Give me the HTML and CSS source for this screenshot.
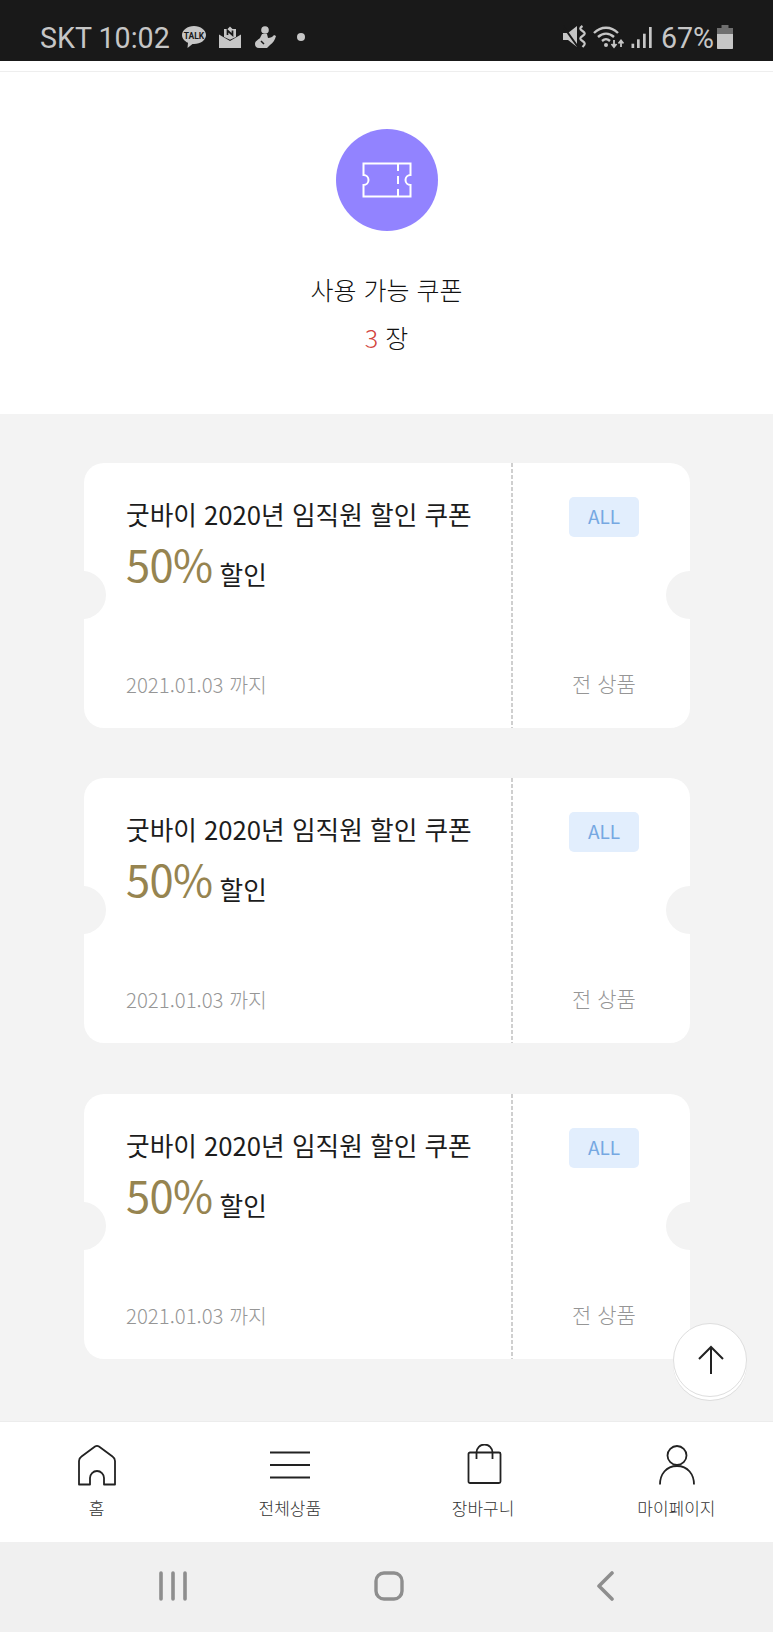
FILE: index.html
```html
<!DOCTYPE html>
<html lang="ko">
<head>
<meta charset="utf-8">
<title>쿠폰</title>
<link rel="stylesheet" href="styles.css">
</head>
<body>
<div class="phone">
  <header class="status">
    <div class="status-left">
      <span class="status-text">SKT 10:02</span>
      <svg class="ic-talk" width="26" height="24" viewBox="0 0 26 24"><path d="M13 1C6.400 1 1 5 1 10c0 3.300 2.400 6.200 6 7.800L6.500 23l5-4.100c.5 0 1 .1 1.500.1 6.600 0 12-4 12-9S19.600 1 13 1z" fill="#c6c6c6"/><text x="13" y="13.500" class="talk-label">TALK</text></svg>
      <svg class="ic-mail" width="22" height="22" viewBox="0 0 22 22"><path d="M0 8.500l11 6.500 11-6.500V22H0z" fill="#c6c6c6"/><path d="M5 3h3.500L11 .5 13.500 3H17v8l-6 2.800L5 11z" fill="#c6c6c6"/><path d="M8.500 9V4.500l5 4.500V4.500" fill="none" stroke="#191919" stroke-width="1.700"/></svg>
      <svg class="ic-baby" width="22" height="24" viewBox="0 0 22 24"><circle cx="10" cy="5" r="3.800" fill="#c6c6c6"/><path d="M7 9h5l1 4c2 0 5-1 6-3l2 1c-1 4-3 7-6 9l-3 3H4c-3 0-4-2-4-4 0-3 3-4 5-6z" fill="#c6c6c6"/><path d="M6 16l3 3" stroke="#191919" stroke-width="1.500"/></svg>
      <span class="dot"></span>
    </div>
    <div class="status-right">
      <svg class="ic-mute" width="23" height="24" viewBox="0 0 23 24"><path d="M0 8h5l9-7v21l-9-7H0z" fill="#c6c6c6"/><path d="M0 1l15 21" stroke="#191919" stroke-width="2"/><path d="M19.500 1c-3 2-3 3 0 5s3 3 0 5-3 3 0 5 3 3 0 6" fill="none" stroke="#c6c6c6" stroke-width="2.200"/></svg>
      <svg class="ic-wifi" width="31" height="24" viewBox="0 0 31 24"><g fill="none" stroke="#c6c6c6" stroke-width="2.400"><path d="M1 8c7-7 17-7 24 0"/><path d="M5 12c5-4.500 11-4.500 16 0"/><path d="M9 16c3-2.500 5-2.500 8 0"/></g><circle cx="13" cy="20" r="2" fill="#c6c6c6"/><path d="M21 15v6M18.500 19l2.500 3 2.500-3M28 22v-6M25.500 18.500l2.500-3 2.500 3" fill="none" stroke="#c6c6c6" stroke-width="1.800"/></svg>
      <svg class="ic-signal" width="21" height="24" viewBox="0 0 21 24"><g fill="#c6c6c6"><rect x="0.500" y="18.700" width="2.700" height="4.300"/><rect x="6" y="14.300" width="2.700" height="8.700"/><rect x="12" y="8.700" width="2.700" height="14.300"/><rect x="18" y="2" width="2.700" height="21"/></g></svg>
      <span class="status-text">67%</span>
      <svg class="ic-batt" width="16" height="24" viewBox="0 0 16 24"><path d="M4.500 0h7v3h-7z" fill="#6f6f6f"/><path d="M0 3h16v6H0z" fill="#6f6f6f"/><path d="M0 9h16v14c0 .6-.4 1-1 1H1c-.6 0-1-.4-1-1z" fill="#c6c6c6"/></svg>
    </div>
  </header>

  <div class="topbar"></div>

  <section class="hero">
    <div class="hero-circle">
      <svg width="50" height="36" viewBox="0 0 50 36"><path d="M1.500 1.500h47v11.500a5 5 0 0 0 0 10v11.500h-47V23a5 5 0 0 0 0-10z" fill="none" stroke="#fff" stroke-width="2"/><path d="M36 1v8M36 14v8M36 27v8" stroke="#fff" stroke-width="2"/></svg>
    </div>
    <p class="hero-title">사용 가능 쿠폰</p>
    <p class="hero-count"><span class="red">3</span> 장</p>
  </section>

  <main class="list">
    <article class="coupon">
      <div class="coupon-main">
        <p class="coupon-name">굿바이 2020년 임직원 할인 쿠폰</p>
        <p class="coupon-rate"><span class="pct">50%</span> <span class="off">할인</span></p>
        <p class="coupon-date">2021.01.03 까지</p>
      </div>
      <div class="coupon-side">
        <span class="badge">ALL</span>
        <span class="scope">전 상품</span>
      </div>
    </article>
    <article class="coupon">
      <div class="coupon-main">
        <p class="coupon-name">굿바이 2020년 임직원 할인 쿠폰</p>
        <p class="coupon-rate"><span class="pct">50%</span> <span class="off">할인</span></p>
        <p class="coupon-date">2021.01.03 까지</p>
      </div>
      <div class="coupon-side">
        <span class="badge">ALL</span>
        <span class="scope">전 상품</span>
      </div>
    </article>
    <article class="coupon coupon-last">
      <div class="coupon-main">
        <p class="coupon-name">굿바이 2020년 임직원 할인 쿠폰</p>
        <p class="coupon-rate"><span class="pct">50%</span> <span class="off">할인</span></p>
        <p class="coupon-date">2021.01.03 까지</p>
      </div>
      <div class="coupon-side">
        <span class="badge">ALL</span>
        <span class="scope">전 상품</span>
      </div>
    </article>
    <button class="to-top" type="button" aria-label="맨 위로">
      <svg width="28" height="30" viewBox="0 0 28 30"><path d="M14 29V2M2 14L14 2l12 12" fill="none" stroke="#222" stroke-width="2"/></svg>
    </button>
  </main>

  <nav class="tabs">
    <a class="tab">
      <svg width="38" height="42" viewBox="0 0 38 42"><path d="M1 40.500V17c0-2 1-3.500 2.500-4.500L17 2.500q2-1.200 4 0l13.500 10c1.500 1 2.500 2.500 2.500 4.500v23.500H26V34a7 7 0 0 0-14 0v6.500z" fill="none" stroke="#222" stroke-width="1.800" stroke-linejoin="round"/></svg>
      <span>홈</span>
    </a>
    <a class="tab">
      <svg width="40" height="42" viewBox="0 0 40 42"><path d="M0 8.500h40M0 21h40M0 33.500h40" stroke="#222" stroke-width="1.800"/></svg>
      <span>전체상품</span>
    </a>
    <a class="tab">
      <svg width="38" height="42" viewBox="0 0 38 42"><rect x="4.500" y="8.500" width="32" height="30.500" rx="1.500" fill="none" stroke="#222" stroke-width="1.800"/><path d="M12.500 15V8.500a8 8 0 0 1 16 0V15" fill="none" stroke="#222" stroke-width="1.800"/></svg>
      <span>장바구니</span>
    </a>
    <a class="tab">
      <svg width="38" height="42" viewBox="0 0 38 42"><circle cx="20" cy="11.500" r="9.500" fill="none" stroke="#222" stroke-width="1.800"/><path d="M3 40.500c0-10 6-18.500 17-18.500s17 8.500 17 18.500" fill="none" stroke="#222" stroke-width="1.800"/></svg>
      <span>마이페이지</span>
    </a>
  </nav>

  <footer class="sysnav">
    <svg width="28" height="30" viewBox="0 0 28 30"><path d="M2 2v26M14 2v26M26 2v26" stroke="#8e8e8e" stroke-width="3.600" stroke-linecap="round"/></svg>
    <svg class="sys-home" width="30" height="30" viewBox="0 0 30 30"><rect x="2" y="2" width="26" height="26" rx="8" fill="none" stroke="#8e8e8e" stroke-width="3.400"/></svg>
    <svg width="18" height="30" viewBox="0 0 18 30"><path d="M16 2L3 15l13 13" fill="none" stroke="#8e8e8e" stroke-width="3.600" stroke-linecap="round" stroke-linejoin="round"/></svg>
  </footer>
</div>
</body>
</html>
```
FILE: styles.css
```css
* { box-sizing: border-box; }
html, body { margin: 0; padding: 0; }
body {
  width: 773px;
  height: 1632px;
  overflow: hidden;
  background: #fff;
  font-family: "Noto Sans CJK KR", "Noto Sans", sans-serif;
  font-weight: 300;
}
p { margin: 0; }
.phone { display: flex; flex-direction: column; width: 773px; height: 1632px; }

.status {
  flex: 0 0 61px;
  display: flex;
  justify-content: space-between;
  align-items: center;
  padding: 15px 40px 0 40px;
  background: #191919;
}
.status-left, .status-right { display: flex; align-items: center; }
.status svg { margin-bottom: 3px; }
.status-text {
  font-family: Roboto, sans-serif;
  font-weight: 400;
  font-size: 28.600px;
  line-height: 34px;
  color: #c6c6c6;
}
.talk-label { font-family: Roboto, sans-serif; font-weight: 700; font-size: 8.500px; fill: #191919; text-anchor: middle; }
.ic-talk { margin-left: 11px; }
.ic-mail { margin-left: 12px; }
.ic-baby { margin-left: 14px; }
.dot { width: 8px; height: 8px; border-radius: 50%; background: #c6c6c6; margin-left: 20px; margin-bottom: 3px; }
.ic-wifi { margin-left: 7px; }
.ic-signal { margin-left: 7px; }
.status-right .status-text { margin-left: 9px; }
.ic-batt { margin-left: 3px; }

.topbar { flex: 0 0 11px; background: #fff; border-bottom: 1px solid #eeeeee; }

.hero {
  flex: 0 0 342px;
  display: flex;
  flex-direction: column;
  align-items: center;
  padding-top: 57px;
  background: #fff;
}
.hero-circle {
  width: 102px;
  height: 102px;
  border-radius: 50%;
  background: #9283ff;
  display: flex;
  align-items: center;
  justify-content: center;
}
.hero-title { margin-top: 40px; font-size: 25px; line-height: 36px; color: #111; }
.hero-count { margin-top: 12px; font-size: 25px; line-height: 36px; color: #111; }
.red { color: #d2443c; }

.list {
  position: relative;
  flex: 1;
  display: flex;
  flex-direction: column;
  gap: 50px;
  padding: 49px 83px 0 84px;
  background: #f3f3f3;
}
.coupon {
  position: relative;
  display: flex;
  height: 265px;
  background: #fff;
  border-radius: 20px;
  overflow: hidden;
}
.coupon-last { margin-top: 1px; }
.coupon::before, .coupon::after {
  content: "";
  position: absolute;
  top: 108px;
  width: 48px;
  height: 48px;
  border-radius: 50%;
  background: #f3f3f3;
}
.coupon::before { left: -26px; }
.coupon::after { right: -24px; }
.coupon-main {
  flex: 0 0 427px;
  display: flex;
  flex-direction: column;
  padding: 30px 0 0 42px;
}
.coupon-name { font-size: 25.700px; line-height: 42px; font-weight: 400; color: #1c1c1c; white-space: nowrap; }
.coupon-rate { margin-top: -1px; display: flex; align-items: flex-start; gap: 7px; }
.pct { font-size: 43.500px; line-height: 60px; font-weight: 400; letter-spacing: -0.600px; color: #968450; }
.off { margin-top: 15px; font-size: 25.700px; line-height: 50px; font-weight: 400; color: #1c1c1c; }
.coupon-date { margin-top: auto; margin-bottom: 29px; font-size: 20.400px; line-height: 30px; color: #969696; }
.coupon-side {
  flex: 1;
  display: flex;
  flex-direction: column;
  align-items: flex-start;
  padding: 34px 0 0 58px;
  background: repeating-linear-gradient(#cfcfcf 0 4px, transparent 4px 6px) left top / 2px 100% no-repeat;
}
.badge {
  width: 70px;
  height: 40px;
  border-radius: 5px;
  background: #e2eefd;
  color: #76a8e2;
  font-size: 19px;
  font-weight: 400;
  line-height: 37px;
  text-align: center;
}
.scope { margin-top: auto; margin-bottom: 30px; margin-left: 3px; font-size: 21px; line-height: 30px; color: #969696; white-space: nowrap; }

.to-top {
  position: absolute;
  right: 26px;
  top: 909px;
  width: 74px;
  height: 74px;
  padding: 0 0 0 2px;
  border-radius: 50%;
  border: 1px solid #dedede;
  background: #fff;
  box-shadow: 0 3px 0 #fff, 0 4px 0 #dcdcdc;
  display: flex;
  align-items: center;
  justify-content: center;
}

.tabs {
  flex: 0 0 121px;
  display: grid;
  grid-template-columns: repeat(4, 1fr);
  background: #fff;
  border-top: 1px solid #ececec;
}
.tab {
  display: flex;
  flex-direction: column;
  align-items: center;
  padding-top: 22px;
  font-size: 17px;
  line-height: 24px;
  color: #333;
}
.tab span { margin-top: 10px; }

.sysnav {
  flex: 0 0 90px;
  display: flex;
  align-items: center;
  background: #f0f0f0;
  padding: 0 159px 3px 159px;
  justify-content: space-between;
}
.sys-home { margin-right: 6px; }
```
